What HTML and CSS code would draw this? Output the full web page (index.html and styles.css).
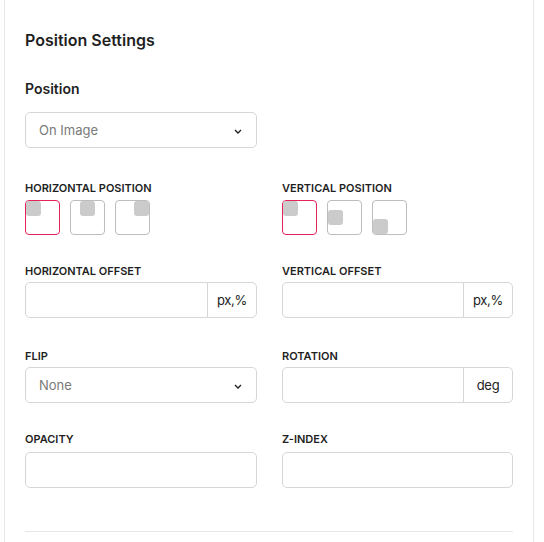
FILE: index.html
```html
<!DOCTYPE html>
<html>
<head>
<meta charset="utf-8">
<link rel="stylesheet" href="styles.css">
</head>
<body>
<div class="card">
  <h2 class="title">Position Settings</h2>
  <div class="field-main">
    <div class="main-label">Position</div>
    <div class="select half"><span>On Image</span>
      <svg class="chev" width="8" height="5" viewBox="0 0 8 5"><path d="M1 1l3 3 3-3" fill="none" stroke="#222" stroke-width="1.4"/></svg>
    </div>
  </div>
  <div class="row row-pos">
    <div class="field">
      <div class="label">Horizontal Position</div>
      <div class="choices">
        <div class="choice active"><span class="dot h-left v-top"></span></div>
        <div class="choice"><span class="dot h-center v-top"></span></div>
        <div class="choice"><span class="dot h-right v-top"></span></div>
      </div>
    </div>
    <div class="field">
      <div class="label">Vertical Position</div>
      <div class="choices">
        <div class="choice active"><span class="dot h-left v-top"></span></div>
        <div class="choice"><span class="dot h-left v-middle"></span></div>
        <div class="choice"><span class="dot h-left v-bottom"></span></div>
      </div>
    </div>
  </div>
  <div class="row row-offset">
    <div class="field">
      <div class="label">Horizontal Offset</div>
      <div class="input"><div class="fill"></div><div class="unit">px,%</div></div>
    </div>
    <div class="field">
      <div class="label">Vertical Offset</div>
      <div class="input"><div class="fill"></div><div class="unit">px,%</div></div>
    </div>
  </div>
  <div class="row row-flip">
    <div class="field">
      <div class="label">Flip</div>
      <div class="select"><span>None</span>
        <svg class="chev" width="8" height="5" viewBox="0 0 8 5"><path d="M1 1l3 3 3-3" fill="none" stroke="#222" stroke-width="1.4"/></svg>
      </div>
    </div>
    <div class="field">
      <div class="label">Rotation</div>
      <div class="input"><div class="fill"></div><div class="unit">deg</div></div>
    </div>
  </div>
  <div class="row row-opacity">
    <div class="field">
      <div class="label">Opacity</div>
      <div class="input"><div class="fill"></div></div>
    </div>
    <div class="field">
      <div class="label">Z-Index</div>
      <div class="input"><div class="fill"></div></div>
    </div>
  </div>
  <hr class="divider">
</div>
</body>
</html>
```
FILE: styles.css
```css
* { box-sizing: border-box; }
html, body { margin: 0; padding: 0; background: #fff; }
body { font-family: Inter, "Noto Sans", sans-serif; color: #1f1f1f; }
.card {
  margin-left: 4px;
  width: 530px;
  border-left: 1px solid #e6e6e6;
  border-right: 1px solid #e6e6e6;
  padding: 28px 20px 0 20px;
  min-height: 560px;
}
.title {
  margin: 0;
  font-size: 16px;
  line-height: 24px;
  font-weight: 600;
  color: #1f1f1f;
}
.field-main { margin-top: 27px; }
.main-label {
  font-size: 14px;
  line-height: 20px;
  font-weight: 600;
  margin-bottom: 13px;
}
.select {
  height: 36px;
  border: 1px solid #d6d6d6;
  border-radius: 5px;
  display: flex;
  align-items: center;
  justify-content: space-between;
  padding: 0 14px 0 13px;
  font-size: 13px;
  color: #7a7a7a;
}
.select.half { width: 232px; }
.chev { display: block; margin-top: 2px; }
.row {
  display: grid;
  grid-template-columns: 232px 231px;
  column-gap: 25px;
}
.row-pos { margin-top: 33px; }
.row-offset { margin-top: 29px; }
.row-flip { margin-top: 31px; }
.row-opacity { margin-top: 29px; }
.label {
  font-size: 11px;
  line-height: 14px;
  font-weight: 600;
  text-transform: uppercase;
  margin-bottom: 4px;
  color: #1f1f1f;
}
.row-pos .label { margin-bottom: 5px; }
.row-opacity .label { margin-bottom: 6px; }
.choices { display: flex; gap: 10px; }
.choice {
  width: 35px;
  height: 35px;
  border: 1px solid #bdbdbd;
  border-radius: 4px;
  display: flex;
}
.choice.active { border-color: #e5235a; }
.dot {
  width: 15px;
  height: 15px;
  background: #cbcbcb;
  border-radius: 3px;
}
.h-left { margin-right: auto; }
.h-center { margin: 0 auto; }
.h-right { margin-left: auto; }
.v-top { align-self: flex-start; }
.v-middle { align-self: center; }
.v-bottom { align-self: flex-end; }
.input {
  height: 36px;
  border: 1px solid #d6d6d6;
  border-radius: 5px;
  display: flex;
}
.fill { flex: 1; }
.unit {
  width: 49px;
  border-left: 1px solid #d6d6d6;
  display: flex;
  align-items: center;
  justify-content: center;
  font-size: 13px;
  letter-spacing: -0.3px;
  color: #222;
}
.divider {
  margin: 43px 0 0 0;
  border: 0;
  border-top: 1px solid #e6e6e6;
}
```
